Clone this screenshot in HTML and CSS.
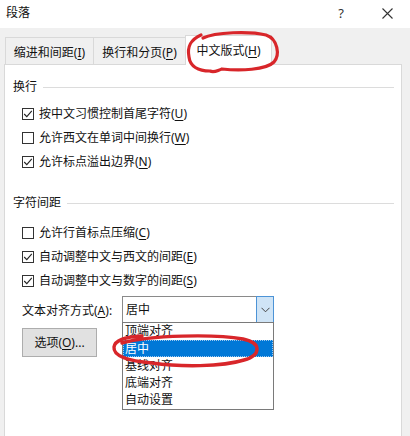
FILE: index.html
```html
<!DOCTYPE html>
<html lang="zh-CN">
<head>
<meta charset="utf-8">
<title>段落</title>
<link rel="stylesheet" href="styles.css">
</head>
<body>
<div class="dialog">
  <div class="titlebar">
    <span class="title">段落</span>
    <span class="help">?</span>
    <svg class="close" width="11" height="11" viewBox="0 0 11 11"><path d="M0.5 0.5 L10.5 10.5 M10.5 0.5 L0.5 10.5" stroke="#333" stroke-width="1.1" fill="none"/></svg>
  </div>
  <div class="tabs">
    <div class="tab t1">缩进和间距(<u>I</u>)</div>
    <div class="tab t2">换行和分页(<u>P</u>)</div>
    <div class="tab t3 active">中文版式(<u>H</u>)</div>
  </div>
  <div class="panel">
    <div class="group-title"><span>换行</span><i class="rule"></i></div>
    <div class="rows first">
      <label class="row"><span class="cb on"><svg width="10" height="10" viewBox="0 0 10 10"><path d="M1.2 5 L3.8 7.6 L8.8 1.8" stroke="#222" stroke-width="1.1" fill="none"/></svg></span>按中文习惯控制首尾字符(<u>U</u>)</label>
      <label class="row"><span class="cb"></span>允许西文在单词中间换行(<u>W</u>)</label>
      <label class="row"><span class="cb on"><svg width="10" height="10" viewBox="0 0 10 10"><path d="M1.2 5 L3.8 7.6 L8.8 1.8" stroke="#222" stroke-width="1.1" fill="none"/></svg></span>允许标点溢出边界(<u>N</u>)</label>
    </div>
    <div class="group-title second"><span>字符间距</span><i class="rule"></i></div>
    <div class="rows">
      <label class="row"><span class="cb"></span>允许行首标点压缩(<u>C</u>)</label>
      <label class="row"><span class="cb on"><svg width="10" height="10" viewBox="0 0 10 10"><path d="M1.2 5 L3.8 7.6 L8.8 1.8" stroke="#222" stroke-width="1.1" fill="none"/></svg></span>自动调整中文与西文的间距(<u>E</u>)</label>
      <label class="row"><span class="cb on"><svg width="10" height="10" viewBox="0 0 10 10"><path d="M1.2 5 L3.8 7.6 L8.8 1.8" stroke="#222" stroke-width="1.1" fill="none"/></svg></span>自动调整中文与数字的间距(<u>S</u>)</label>
    </div>
    <div class="align-row">
      <span class="align-label">文本对齐方式(<u>A</u>):</span>
      <div class="select">
        <span class="value">居中</span>
        <span class="drop"><svg width="9" height="6" viewBox="0 0 9 6"><path d="M0.5 0.8 L4.5 4.8 L8.5 0.8" stroke="#444" stroke-width="1" fill="none"/></svg></span>
        <ul class="list">
          <li>顶端对齐</li>
          <li class="sel">居中</li>
          <li>基线对齐</li>
          <li>底端对齐</li>
          <li>自动设置</li>
        </ul>
      </div>
    </div>
    <div class="btn">选项(<u>O</u>)...</div>
  </div>
  <svg class="marks" width="410" height="436" viewBox="0 0 410 436">
    <path d="M203 38 C215 32, 250 31, 266 35 C278 39, 280 55, 274 62 C266 70, 240 71, 222 69 C216 71, 214 73, 210 71 C198 71, 190 66, 189 57 C187 47, 190 40, 201 35" stroke="#d8262a" stroke-width="3.2" fill="none" stroke-linecap="round"/>
    <path d="M122 343 C150 335, 215 334, 243 339 C262 343, 261 355, 244 360 C222 367, 180 367, 152 363 C128 361, 113 356, 114 347 C115 340, 124 337, 142 336" stroke="#d8262a" stroke-width="3.4" fill="none" stroke-linecap="round"/>
  </svg>
</div>
</body>
</html>
```
FILE: styles.css
```css
html, body {
  margin: 0;
  padding: 0;
}
body {
  background: #f0f0f0;
  font-family: "Noto Sans", "Noto Sans CJK SC", sans-serif;
  font-size: 12px;
  color: #111;
  width: 410px;
  height: 436px;
  overflow: hidden;
}
u {
  text-decoration: underline;
  text-underline-offset: 2px;
  text-decoration-thickness: 1px;
}
.dialog {
  position: relative;
  width: 410px;
  height: 436px;
  overflow: hidden;
}
.titlebar {
  height: 28px;
  background: #fff;
  display: flex;
  align-items: center;
  padding-left: 6px;
}
.title {
  flex: 1;
  line-height: 28px;
  margin-top: -2px;
}
.help {
  font-size: 13px;
  color: #333;
  margin-right: 38px;
  margin-top: -2px;
}
.close {
  margin-right: 17px;
  margin-top: -2px;
}
.tabs {
  display: flex;
  align-items: flex-end;
  padding-top: 7px;
  padding-left: 5px;
  height: 29px;
}
.tab {
  box-sizing: border-box;
  height: 27px;
  border: 1px solid #d9d9d9;
  border-bottom: none;
  text-align: center;
  padding-top: 5px;
  line-height: 20px;
  background: #f0f0f0;
}
.t1 { width: 89px; }
.t2 { width: 93px; margin-left: -1px; }
.t3 { width: 87px; margin-left: -1px; }
.tab.active {
  position: relative;
  z-index: 1;
  background: #fff;
  height: 30px;
  margin-bottom: -1px;
  padding-top: 5px;
}
.panel {
  margin-left: 4px;
  width: 398px;
  height: 372px;
  box-sizing: border-box;
  background: #fff;
  border: 1px solid #d9d9d9;
  border-bottom: none;
  padding: 13px 7px 0 8px;
  position: relative;
}
.group-title {
  display: flex;
  align-items: center;
  height: 18px;
  line-height: 18px;
}
.group-title.second {
  margin-top: 20px;
}
.rule {
  flex: 1;
  height: 1px;
  background: #dcdcdc;
  margin-left: 6px;
}
.rows {
  padding-left: 9px;
  margin-top: 9px;
}
.rows.first {
  margin-top: 6px;
}
.row {
  display: flex;
  align-items: center;
  height: 24px;
  line-height: 24px;
}
.cb {
  box-sizing: border-box;
  width: 12px;
  height: 12px;
  border: 1px solid #333;
  margin-right: 5px;
  display: flex;
  align-items: center;
  justify-content: center;
  background: #fff;
}
.align-row {
  display: flex;
  align-items: center;
  margin-top: 3px;
  padding-left: 9px;
  height: 27px;
}
.align-label {
  width: 100px;
}
.select {
  position: relative;
  box-sizing: border-box;
  width: 152px;
  height: 27px;
  border: 1px solid #8a8a8a;
  display: flex;
  align-items: center;
}
.value {
  flex: 1;
  padding-left: 3px;
  line-height: 25px;
}
.drop {
  box-sizing: border-box;
  width: 18px;
  height: 27px;
  margin: -1px -1px -1px 0;
  background: #cfe4f6;
  border: 1px solid #4c93d6;
  display: flex;
  align-items: center;
  justify-content: center;
}
.list {
  position: absolute;
  left: -1px;
  top: 25px;
  width: 152px;
  height: 88px;
  box-sizing: border-box;
  margin: 0;
  padding: 0;
  list-style: none;
  background: #fff;
  border: 1px solid #7a7a7a;
  overflow: hidden;
  z-index: 2;
}
.list li {
  height: 17px;
  line-height: 17px;
  padding-left: 2px;
  box-sizing: border-box;
}
.list li:first-child {
  line-height: 15px;
}
.list li.sel {
  background: #0078d7;
  color: #fff;
  outline: 1px dotted #9cc9f0;
  outline-offset: -1px;
}
.btn {
  box-sizing: border-box;
  width: 75px;
  height: 29px;
  margin-left: 9px;
  margin-top: 5px;
  background: #e1e1e1;
  border: 1px solid #adadad;
  text-align: center;
  line-height: 27px;
}
.marks {
  position: absolute;
  left: 0;
  top: 0;
  pointer-events: none;
  z-index: 5;
}
```
